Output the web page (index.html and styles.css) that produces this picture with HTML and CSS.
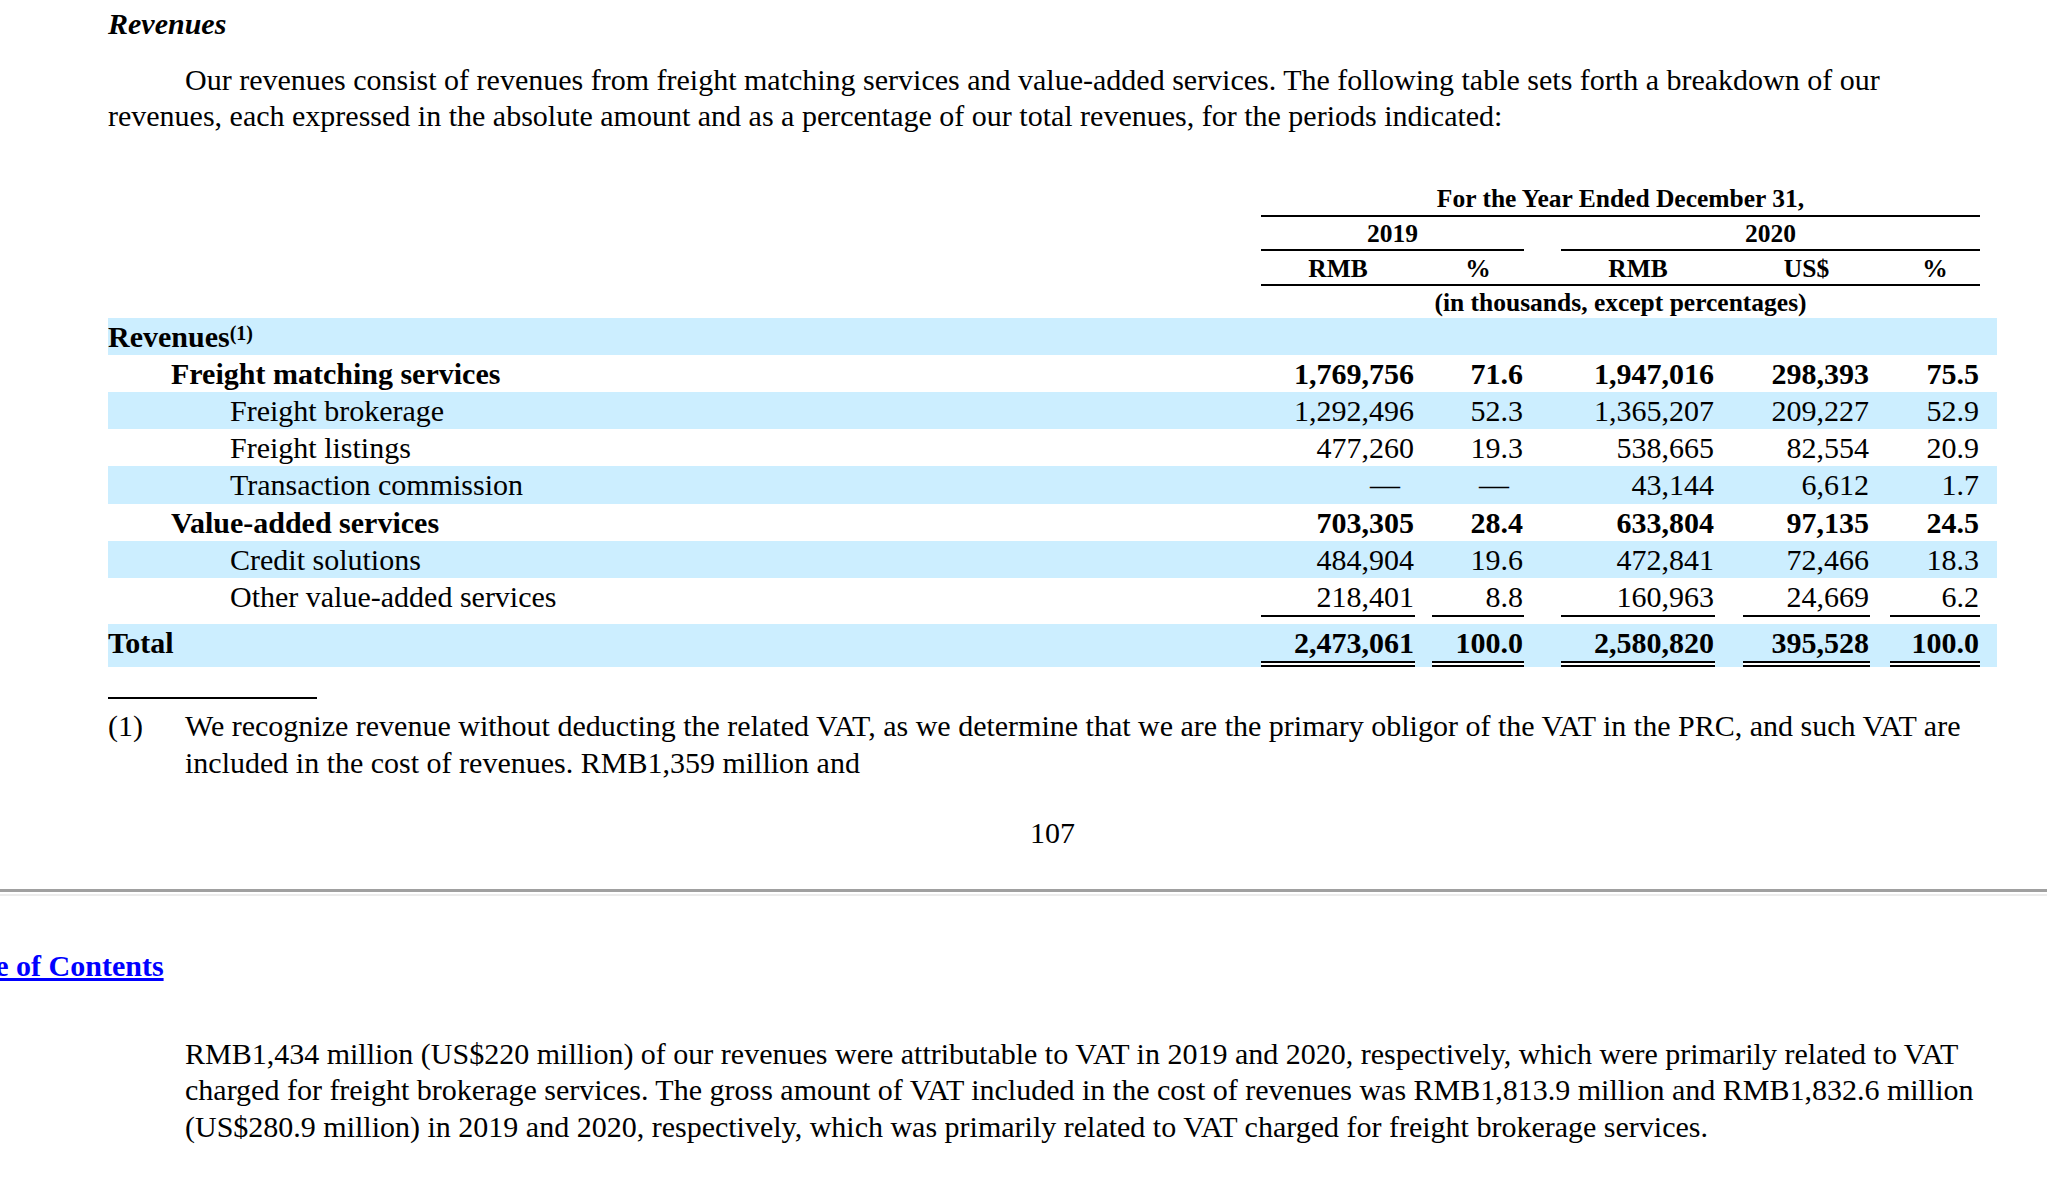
FILE: index.html
```html
<!DOCTYPE html>
<html lang="en">
<head>
<meta charset="utf-8">
<title>Revenues</title>
<link rel="stylesheet" href="styles.css">
</head>
<body>
<div class="page">
  <p class="heading">Revenues</p>
  <p class="intro">Our revenues consist of revenues from freight matching services and value-added services. The following table sets forth a breakdown of our revenues, each expressed in the absolute amount and as a percentage of our total revenues, for the periods indicated:</p>

  <table class="rev">
    <colgroup>
      <col class="w-label">
      <col class="w-c1">
      <col class="w-s1">
      <col class="w-c2">
      <col class="w-s2">
      <col class="w-c3">
      <col class="w-s3">
      <col class="w-c4">
      <col class="w-s4">
      <col class="w-c5">
      <col class="w-end">
    </colgroup>
    <thead>
      <tr class="h1">
        <td></td>
        <td colspan="9" class="hc ul">For the Year Ended December 31,</td>
        <td></td>
      </tr>
      <tr class="h2">
        <td></td>
        <td colspan="3" class="hc ul">2019</td>
        <td></td>
        <td colspan="5" class="hc ul">2020</td>
        <td></td>
      </tr>
      <tr class="h3">
        <td></td>
        <td class="hc ul">RMB</td>
        <td class="ul"></td>
        <td class="hc ul">%</td>
        <td class="ul"></td>
        <td class="hc ul">RMB</td>
        <td class="ul"></td>
        <td class="hc ul">US$</td>
        <td class="ul"></td>
        <td class="hc ul">%</td>
        <td></td>
      </tr>
      <tr class="h4">
        <td></td>
        <td colspan="9" class="hc">(in thousands, except percentages)</td>
        <td></td>
      </tr>
    </thead>
    <tbody>
      <tr class="row shade">
        <td class="lbl strong">Revenues<sup class="fnref">(1)</sup></td>
        <td></td><td></td><td></td><td></td><td></td><td></td><td></td><td></td><td></td><td></td>
      </tr>
      <tr class="row strong">
        <td class="lbl l1">Freight matching services</td>
        <td class="num">1,769,756</td><td></td>
        <td class="num">71.6</td><td></td>
        <td class="num">1,947,016</td><td></td>
        <td class="num">298,393</td><td></td>
        <td class="num">75.5</td><td></td>
      </tr>
      <tr class="row shade">
        <td class="lbl l2">Freight brokerage</td>
        <td class="num">1,292,496</td><td></td>
        <td class="num">52.3</td><td></td>
        <td class="num">1,365,207</td><td></td>
        <td class="num">209,227</td><td></td>
        <td class="num">52.9</td><td></td>
      </tr>
      <tr class="row">
        <td class="lbl l2">Freight listings</td>
        <td class="num">477,260</td><td></td>
        <td class="num">19.3</td><td></td>
        <td class="num">538,665</td><td></td>
        <td class="num">82,554</td><td></td>
        <td class="num">20.9</td><td></td>
      </tr>
      <tr class="row shade">
        <td class="lbl l2">Transaction commission</td>
        <td class="num dash">—</td><td></td>
        <td class="num dash">—</td><td></td>
        <td class="num">43,144</td><td></td>
        <td class="num">6,612</td><td></td>
        <td class="num">1.7</td><td></td>
      </tr>
      <tr class="row strong">
        <td class="lbl l1">Value-added services</td>
        <td class="num">703,305</td><td></td>
        <td class="num">28.4</td><td></td>
        <td class="num">633,804</td><td></td>
        <td class="num">97,135</td><td></td>
        <td class="num">24.5</td><td></td>
      </tr>
      <tr class="row shade">
        <td class="lbl l2">Credit solutions</td>
        <td class="num">484,904</td><td></td>
        <td class="num">19.6</td><td></td>
        <td class="num">472,841</td><td></td>
        <td class="num">72,466</td><td></td>
        <td class="num">18.3</td><td></td>
      </tr>
      <tr class="row">
        <td class="lbl l2">Other value-added services</td>
        <td class="num sub">218,401</td><td></td>
        <td class="num sub">8.8</td><td></td>
        <td class="num sub">160,963</td><td></td>
        <td class="num sub">24,669</td><td></td>
        <td class="num sub">6.2</td><td></td>
      </tr>
      <tr class="gap"><td colspan="11"></td></tr>
      <tr class="row shade strong">
        <td class="lbl">Total</td>
        <td class="num dbl">2,473,061</td><td></td>
        <td class="num dbl">100.0</td><td></td>
        <td class="num dbl">2,580,820</td><td></td>
        <td class="num dbl">395,528</td><td></td>
        <td class="num dbl">100.0</td><td></td>
      </tr>
    </tbody>
  </table>

  <div class="fn-rule"></div>
  <div class="footnote">
    <span class="fn-num">(1)</span>
    <span class="fn-text">We recognize revenue without deducting the related VAT, as we determine that we are the primary obligor of the VAT in the PRC, and such VAT are included in the cost of revenues. RMB1,359 million and</span>
  </div>

  <p class="pageno">107</p>
</div>

<hr class="page-break">

<div class="toc"><a href="#" class="toc-link">Table of Contents</a></div>

<div class="page">
  <p class="cont">RMB1,434 million (US$220 million) of our revenues were attributable to VAT in 2019 and 2020, respectively, which were primarily related to VAT charged for freight brokerage services. The gross amount of VAT included in the cost of revenues was RMB1,813.9 million and RMB1,832.6 million (US$280.9 million) in 2019 and 2020, respectively, which was primarily related to VAT charged for freight brokerage services.</p>
</div>
</body>
</html>
```

FILE: styles.css
```css
html, body {
  margin: 0;
  padding: 0;
  background: #ffffff;
}

body {
  font-family: "Liberation Serif", "Times New Roman", Times, serif;
  font-size: 30px;
  line-height: 36.6px;
  color: #000000;
  overflow-x: hidden;
}

.page {
  margin-left: 108px;
  width: 1889px;
}

p {
  margin: 0;
}

.heading {
  padding-top: 6px;
  font-weight: bold;
  font-style: italic;
}

.intro {
  margin-top: 19px;
  text-indent: 77px;
}

/* ---------- table ---------- */
.rev {
  margin-top: 50px;
  width: 1889px;
  table-layout: fixed;
  border-collapse: separate;
  border-spacing: 0;
}

.w-label { width: 1153px; }
.w-c1 { width: 154px; }
.w-s1 { width: 17px; }
.w-c2 { width: 92px; }
.w-s2 { width: 37px; }
.w-c3 { width: 154px; }
.w-s3 { width: 28px; }
.w-c4 { width: 127px; }
.w-s4 { width: 20px; }
.w-c5 { width: 90px; }
.w-end { width: 17px; }

.rev td {
  padding: 0;
  vertical-align: top;
  white-space: nowrap;
}

.rev thead td {
  font-size: 25.5px;
  font-weight: bold;
}

.hc {
  text-align: center;
}

.ul {
  border-bottom: 2px solid #000000;
}

.h1 td {
  line-height: 28px;
  padding-bottom: 2px;
}

.h2 td {
  line-height: 28px;
  padding-top: 3px;
  padding-bottom: 1px;
}

.h3 td {
  line-height: 29px;
  padding-top: 3px;
  padding-bottom: 1px;
}

.h4 td {
  line-height: 28px;
  padding-top: 3px;
  padding-bottom: 1px;
}

.row td {
  line-height: 37.15px;
  background-clip: padding-box;
}

.shade td {
  background-color: #cceeff;
}

.strong td,
td.strong {
  font-weight: bold;
}

.lbl {
  text-align: left;
}

.l1 {
  padding-left: 63px !important;
}

.l2 {
  padding-left: 122px !important;
}

.num {
  text-align: right;
  padding-right: 1px !important;
}

.num.dash {
  padding-right: 15px !important;
}

.sub {
  border-bottom: 2px solid #000000;
}

.dbl {
  border-bottom: 6px double #000000;
}

.gap td {
  height: 7px;
  line-height: 7px;
  font-size: 0;
}

.fnref {
  font-size: 20px;
  line-height: 0;
  vertical-align: 7px;
}

/* ---------- footnote ---------- */
.fn-rule {
  margin-top: 30px;
  width: 209px;
  height: 2px;
  background: #000000;
}

.footnote {
  display: flex;
  margin-top: 9px;
}

.fn-num {
  flex: 0 0 77px;
}

.fn-text {
  flex: 1 1 auto;
}

.pageno {
  margin-top: 34px;
  text-align: center;
}

/* ---------- page break ---------- */
.page-break {
  margin: 37px 0 0;
  height: 2px;
  border: 0;
  border-top: 3px solid #a0a0a0;
  border-bottom: 2px solid #ececec;
}

.toc {
  margin-top: 52px;
  margin-left: -62px;
  font-weight: bold;
}

.toc-link {
  color: #0000ff;
  text-decoration: underline;
}

.cont {
  margin-top: 51px;
  padding-left: 77px;
}
```
